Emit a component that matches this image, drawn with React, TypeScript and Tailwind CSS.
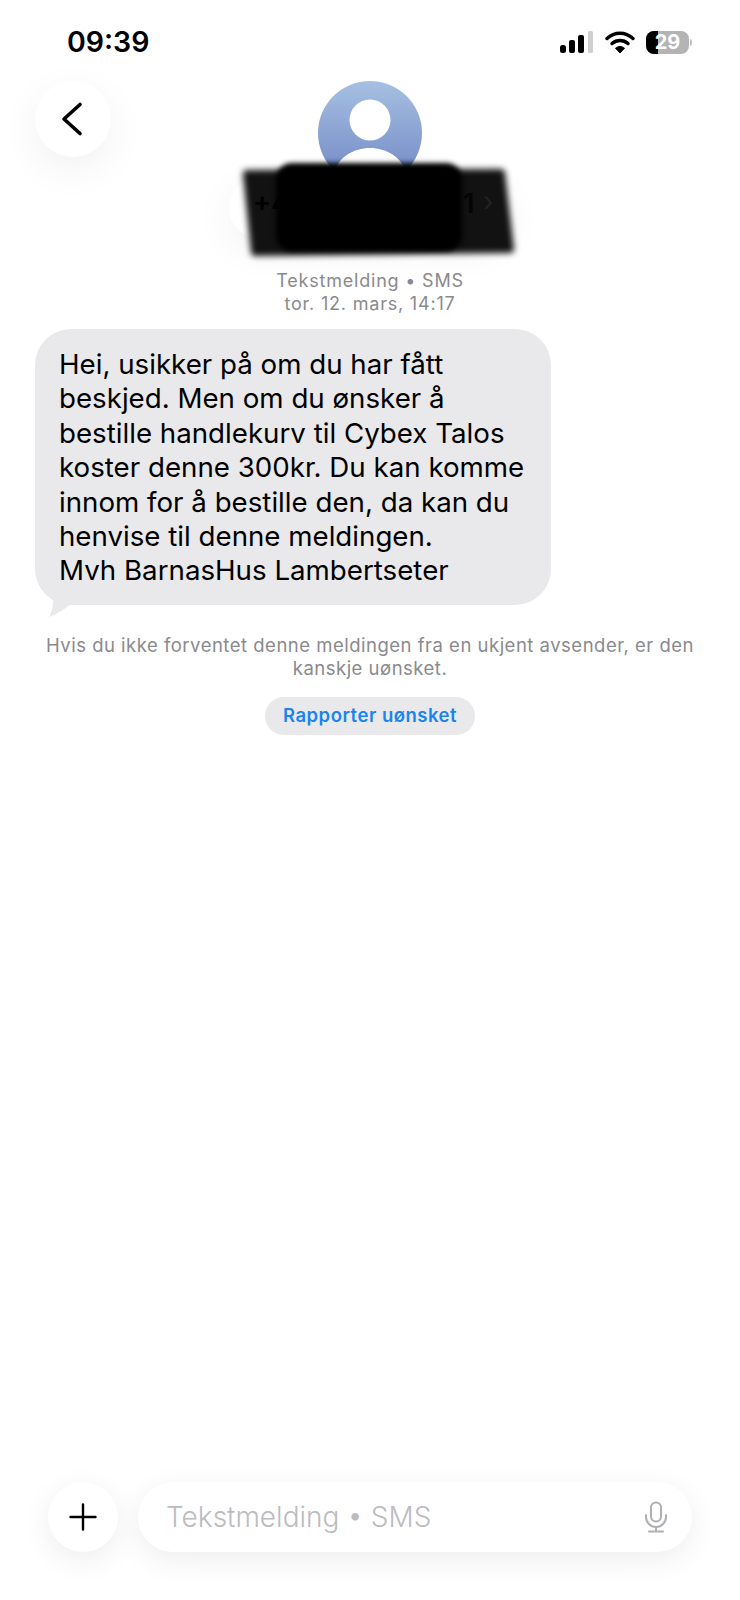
// Messages thread screen: SMS from unknown sender.

const FONT = "font-['Inter','Liberation_Sans',sans-serif]";

function StatusIcons() {
  return (
    <div className="flex items-center gap-[11px]">
      <svg width="35" height="24" viewBox="0 0 35 24" aria-hidden>
        <rect x="1" y="15" width="6" height="8" rx="2.5" fill="#000" />
        <rect x="10" y="10" width="6" height="13" rx="2" fill="#000" />
        <rect x="19" y="5" width="6" height="18" rx="2" fill="#000" />
        <rect x="29" y="1" width="5" height="22" rx="1.5" fill="#cfcfd1" />
      </svg>
      <svg width="30" height="24" viewBox="0 0 30 24" aria-hidden>
        <path d="M2 8.5C9.5 1.5 20.5 1.5 28 8.5" fill="none" stroke="#000" strokeWidth="3.4" strokeLinecap="round" />
        <path d="M7 13.5C11.5 9.5 18.5 9.5 23 13.5" fill="none" stroke="#000" strokeWidth="3.4" strokeLinecap="round" />
        <path d="M15 23L10.5 18.2C13 16 17 16 19.5 18.2Z" fill="#000" stroke="#000" strokeWidth="1" strokeLinejoin="round" />
      </svg>
      <div className="flex items-center gap-[1px]">
        <div className="relative flex h-[23px] w-[43px] items-center justify-center overflow-hidden rounded-[8px] bg-[#b4b4b6]">
          <div className="absolute inset-y-0 left-0 w-[12px] bg-black" />
          <span className="relative text-[20px] font-bold leading-none text-white">29</span>
        </div>
        <div className="h-[7px] w-[2px] rounded-r-full bg-[#c4c4c6]" />
      </div>
    </div>
  );
}

function Avatar() {
  return (
    <svg width="104" height="104" viewBox="0 0 104 104" aria-hidden>
      <defs>
        <linearGradient id="avatarFill" x1="0" y1="0" x2="0" y2="1">
          <stop offset="0" stopColor="#a6c0e2" />
          <stop offset="1" stopColor="#7186c4" />
        </linearGradient>
      </defs>
      <circle cx="52" cy="52" r="52" fill="url(#avatarFill)" />
      <ellipse cx="52" cy="39" rx="20.5" ry="20.5" fill="#fff" />
      <path d="M16 92C20 76 36 67 52 67C68 67 84 76 88 92C79 100 65 104 52 104C39 104 25 100 16 92Z" fill="#fff" />
    </svg>
  );
}

// Hand-painted black redaction over the phone number, with the white name pill showing behind it.
function Redaction() {
  return (
    <div className="absolute left-[229px] top-[162px] h-[94px] w-[285px]">
      <div className="absolute left-0 top-[16px] h-[60px] w-[280px] rounded-full bg-white shadow-[0_10px_40px_rgba(0,0,0,0.06)]" />
      <svg className="absolute left-[13px] top-0 overflow-visible blur-[3px]" width="272" height="94" viewBox="0 0 272 94" aria-hidden>
        <path d="M5 12L259 11L268 87L13 90Z" fill="#121212" stroke="#121212" strokeWidth="8" strokeLinejoin="round" />
      </svg>
      <svg className="absolute left-[46px] top-0 overflow-visible blur-[2.5px]" width="188" height="90" viewBox="0 0 188 90" aria-hidden>
        <rect x="1" y="1" width="186" height="88" rx="16" fill="#000" />
      </svg>
      <span className="absolute left-[24px] top-[28px] text-[27px] font-semibold leading-none text-black">+4</span>
      <span className="absolute left-[234px] top-[28px] text-[27px] font-semibold leading-none text-[#040404]">1</span>
      <span className="absolute left-[254px] top-[26px] text-[27px] leading-none text-[#222222]">›</span>
    </div>
  );
}

function ComposeBar() {
  return (
    <div className="flex items-center gap-5 pb-[48px] pl-[48px] pr-[48px]">
      <button className="flex h-[70px] w-[70px] shrink-0 items-center justify-center rounded-full bg-white shadow-[0_8px_30px_rgba(0,0,0,0.07)]">
        <svg width="28" height="28" viewBox="0 0 28 28" aria-hidden>
          <path d="M14 1.5V26.5M1.5 14H26.5" stroke="#000" strokeWidth="2.4" strokeLinecap="round" />
        </svg>
      </button>
      <div className="flex h-[70px] flex-1 items-center justify-between rounded-full bg-white pl-[28px] pr-[24px] shadow-[0_8px_30px_rgba(0,0,0,0.07)]">
        <span className="text-[28px] font-light text-[#bcbcc0]">Tekstmelding • SMS</span>
        <svg width="24" height="32" viewBox="0 0 24 32" fill="none" stroke="#b0b0b4" strokeWidth="2" strokeLinecap="round" aria-hidden>
          <rect x="7" y="1.5" width="10" height="19" rx="5" />
          <path d="M2 14V16A10 10 0 0 0 22 16V14" />
          <path d="M12 26V30M5 30.5H19" />
        </svg>
      </div>
    </div>
  );
}

export default function App() {
  return (
    <div className={`${FONT} relative flex h-[1600px] w-[740px] flex-col justify-between overflow-hidden bg-white`}>
      <div>
        <div className="flex h-[81px] items-start justify-between pl-[67px] pr-[48px] pt-[23px]">
          <span className="text-[28.5px] font-semibold leading-[37px] text-black">09:39</span>
          <div className="pt-[7px]">
            <StatusIcons />
          </div>
        </div>

        <div className="grid grid-cols-[1fr_104px_1fr] px-[34px]">
          <button className="ml-px flex h-[76px] w-[76px] items-center justify-center rounded-full bg-white shadow-[0_12px_40px_rgba(0,0,0,0.06)]">
            <svg width="24" height="36" viewBox="0 0 24 36" aria-hidden>
              <path d="M19 3.5L3 18L19 32.5" fill="none" stroke="#000" strokeWidth="3.6" strokeLinecap="round" strokeLinejoin="round" />
            </svg>
          </button>
          <Avatar />
        </div>

        <div className="mt-[84px] text-center text-[18px] leading-[23px] tracking-[0.8px] text-[#8a8a8e]">
          <p>Tekstmelding • SMS</p>
          <p>tor. 12. mars, 14:17</p>
        </div>

        <div className="relative ml-[35px] mt-[14px] w-[516px] rounded-[36px] bg-[#e9e9eb] pb-[17px] pl-[24px] pr-[16px] pt-[18px]">
          <p className="text-[27.7px] leading-[34.4px] text-black">
            Hei, usikker på om du har fått
            <br />
            beskjed. Men om du ønsker å
            <br />
            bestille handlekurv til Cybex Talos
            <br />
            koster denne 300kr. Du kan komme
            <br />
            innom for å bestille den, da kan du
            <br />
            henvise til denne meldingen.
            <br />
            Mvh BarnasHus Lambertseter
          </p>
          <svg className="absolute bottom-[-12px] left-[12px]" width="26" height="26" viewBox="0 0 26 26" aria-hidden>
            <path d="M6 0C7 10 6 20 2 26C10 23 16 19 24 13Z" fill="#e9e9eb" />
          </svg>
        </div>

        <p className="mt-[29px] px-[30px] text-center text-[18.5px] leading-[23px] tracking-[0.5px] text-[#8a8a8e]">
          Hvis du ikke forventet denne meldingen fra en ukjent avsender, er den kanskje uønsket.
        </p>

        <div className="mt-[17px] flex justify-center">
          <button className="flex h-[38px] w-[210px] items-center justify-center rounded-full bg-[#e9e9eb] text-[18.5px] font-semibold tracking-[0.5px] text-[#1a84f0]">
            Rapporter uønsket
          </button>
        </div>
      </div>

      <Redaction />
      <ComposeBar />
    </div>
  );
}
